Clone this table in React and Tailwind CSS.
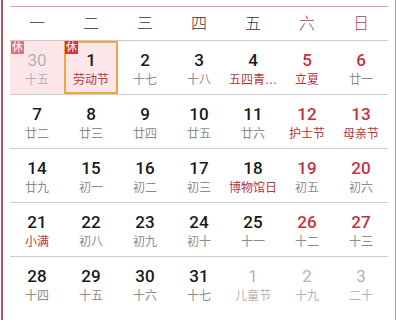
import React from "react";

const weekdays = ["一", "二", "三", "四", "五", "六", "日"];

// d: day, l: lunar / festival, fest: red label, other: not this month, rest: 休
const weeks = [
  [
    { d: 30, l: "十五", other: true, rest: true },
    { d: 1, l: "劳动节", fest: true, rest: true, selected: true },
    { d: 2, l: "十七" },
    { d: 3, l: "十八" },
    { d: 4, l: "五四青…", fest: true },
    { d: 5, l: "立夏", fest: true },
    { d: 6, l: "廿一" },
  ],
  [
    { d: 7, l: "廿二" },
    { d: 8, l: "廿三" },
    { d: 9, l: "廿四" },
    { d: 10, l: "廿五" },
    { d: 11, l: "廿六" },
    { d: 12, l: "护士节", fest: true },
    { d: 13, l: "母亲节", fest: true },
  ],
  [
    { d: 14, l: "廿九" },
    { d: 15, l: "初一" },
    { d: 16, l: "初二" },
    { d: 17, l: "初三" },
    { d: 18, l: "博物馆日", fest: true },
    { d: 19, l: "初五" },
    { d: 20, l: "初六" },
  ],
  [
    { d: 21, l: "小满", fest: true },
    { d: 22, l: "初八" },
    { d: 23, l: "初九" },
    { d: 24, l: "初十" },
    { d: 25, l: "十一" },
    { d: 26, l: "十二" },
    { d: 27, l: "十三" },
  ],
  [
    { d: 28, l: "十四" },
    { d: 29, l: "十五" },
    { d: 30, l: "十六" },
    { d: 31, l: "十七" },
    { d: 1, l: "儿童节", other: true },
    { d: 2, l: "十九", other: true },
    { d: 3, l: "二十", other: true },
  ],
];

function DayCell({ day, weekend }) {
  let numColor = weekend ? "text-[#c1323f] font-medium" : "text-[#1a1a1a] font-medium";
  let lunarColor = day.fest ? "text-[#b9333d]" : "text-[#8c8c8c]";
  if (day.other) {
    numColor = "text-[#b4b4b4] font-normal";
    lunarColor = "text-[#b4b4b4]";
  }
  const bg = day.rest ? "bg-[#fde6ea]" : "";

  return (
    <div className={`relative flex h-[53px] flex-col items-center pt-[9px] ${bg}`}>
      {day.selected && (
        <div className="absolute inset-0 border-2 border-[#eda93c]" />
      )}
      {day.rest && (
        <div
          className={`absolute left-[1px] top-0 flex h-[13px] w-[13px] items-center justify-center text-[11px] leading-none text-white ${
            day.other ? "bg-[#e3717f]" : "bg-[#d8323c]"
          }`}
        >
          休
        </div>
      )}
      <div
        className={`h-[20px] font-['Roboto',sans-serif] text-[17px] leading-[20px] ${numColor}`}
      >
        {day.d}
      </div>
      <div className={`mt-[2px] h-[16px] whitespace-nowrap text-[12px] leading-[16px] ${lunarColor}`}>
        {day.l}
      </div>
    </div>
  );
}

export default function App() {
  return (
    <div
      className="h-[320px] w-[400px] overflow-hidden bg-white pl-[1px]"
      style={{ fontFamily: '"Liberation Sans", "Noto Sans CJK SC", sans-serif' }}
    >
      <div className="h-[320px] w-[395px] border-l-2 border-r border-l-[#b2535d] border-r-[#d48e95] px-[7px] pt-[6px]">
        <div className="grid h-[35px] grid-cols-7 border-y border-t-[#d9a3a8] border-b-[#cccccc]">
          {weekdays.map((w, i) => (
            <div
              key={w}
              className={`flex items-center justify-center text-[16px] font-light ${
                i >= 5 ? "text-[#b3404b]" : "text-[#333333]"
              }`}
            >
              {w}
            </div>
          ))}
        </div>
        {weeks.map((week, wi) => (
          <div
            key={wi}
            className={`grid grid-cols-7 ${wi < weeks.length - 1 ? "border-b border-[#cccccc]" : ""}`}
          >
            {week.map((day, di) => (
              <DayCell key={di} day={day} weekend={di >= 5} />
            ))}
          </div>
        ))}
      </div>
    </div>
  );
}
